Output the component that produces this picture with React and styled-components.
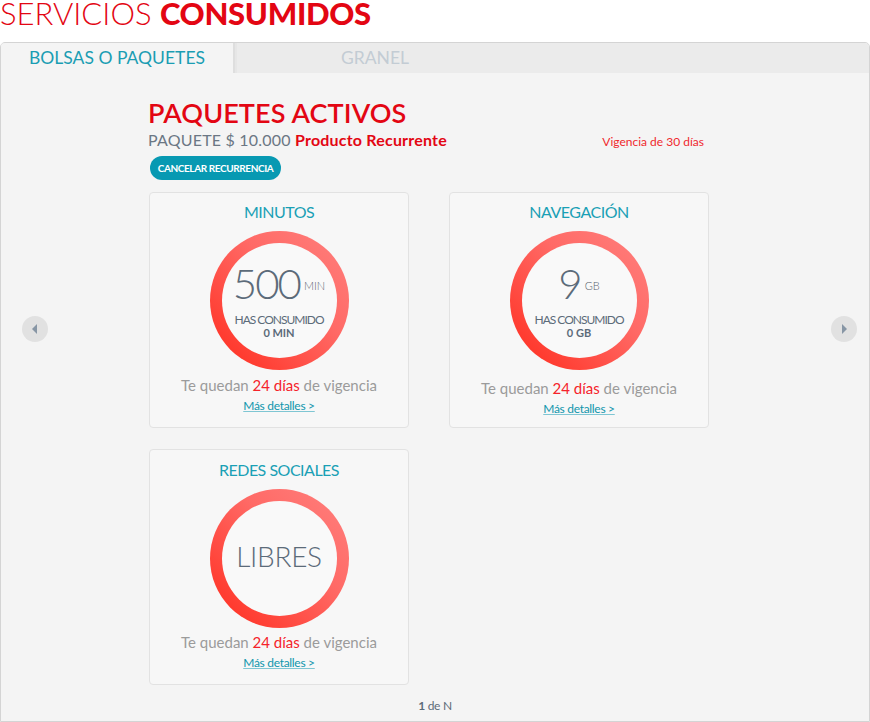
import React from "react";
import styled, { createGlobalStyle } from "styled-components";

const Global = createGlobalStyle`
  html, body { margin: 0; padding: 0; background: #fff; }
  body { font-family: Lato, "Open Sans", sans-serif; }
  * { box-sizing: border-box; }
`;

const Page = styled.div`
  width: 870px;
`;

const Heading = styled.h1`
  margin: 0 0 16px;
  height: 26px;
  font-size: 31px;
  line-height: 26px;
  color: #e30613;
  font-weight: 300;
  white-space: nowrap;
`;

const Strong = styled.span`
  font-weight: 900;
  letter-spacing: -0.3px;
`;

const Panel = styled.section`
  width: 870px;
  height: 680px;
  border: 1px solid #d4d4d4;
  border-radius: 5px 5px 0 0;
  background: #f4f4f4;
  overflow: hidden;
  display: flex;
  flex-direction: column;
`;

const TabBar = styled.div`
  display: flex;
  height: 30px;
  background: #ebebeb;
`;

const Tab = styled.div`
  width: ${(p) => p.$w}px;
  height: 30px;
  display: flex;
  align-items: center;
  justify-content: center;
  font-size: 17.5px;
  line-height: 30px;
  color: ${(p) => (p.$active ? "#1a9db3" : "#c3ccd4")};
  background: ${(p) => (p.$active ? "#f4f4f4" : "transparent")};
  box-shadow: ${(p) => (p.$active ? "2px 0 0 #dedede, 4px 0 0 #e6e6e6" : "none")};
  margin-right: ${(p) => (p.$active ? 4 : 0)}px;
`;

const Body = styled.div`
  display: grid;
  grid-template-columns: 147px 561px 1fr;
  grid-template-rows: auto auto;
`;

const ArrowButton = styled.div`
  width: 26px;
  height: 26px;
  border-radius: 50%;
  background: #e1e1e1;
  display: flex;
  align-items: center;
  justify-content: center;
  margin-top: 243px;
  justify-self: ${(p) => (p.$right ? "end" : "start")};
  margin-left: ${(p) => (p.$right ? 0 : 21)}px;
  margin-right: ${(p) => (p.$right ? 12 : 0)}px;
`;

const Main = styled.div`
  padding-top: 24px;
`;

const Title = styled.h2`
  margin: 0;
  font-size: 27px;
  line-height: 32px;
  font-weight: 600;
  color: #e30613;
  letter-spacing: 0.1px;
`;

const InfoRow = styled.div`
  margin-top: 1px;
  display: flex;
  justify-content: space-between;
  align-items: baseline;
  padding-right: 5px;
`;

const PackName = styled.div`
  font-size: 16px;
  line-height: 20px;
  color: #6b7784;
  font-weight: 400;
  letter-spacing: 0.2px;
`;

const Recurrent = styled.span`
  color: #e30613;
  font-weight: 700;
`;

const Validity = styled.div`
  font-size: 12px;
  color: #f0282d;
`;

const CancelButton = styled.button`
  margin: 6px 0 0 2px;
  width: 131px;
  height: 24px;
  border: none;
  border-radius: 12px;
  background: #0799b2;
  color: #fff;
  font-family: Lato, sans-serif;
  font-size: 10px;
  font-weight: 700;
  letter-spacing: -0.4px;
  padding: 0;
  display: block;
`;

const CardGrid = styled.div`
  margin-top: 12px;
  padding-left: 1px;
  display: grid;
  grid-template-columns: 260px 260px;
  column-gap: 40px;
  row-gap: 21px;
`;

const Card = styled.div`
  height: 236px;
  border: 1px solid #e2e2e2;
  border-radius: 4px;
  background: #f7f7f7;
  padding-top: ${(p) => p.$pt || 9}px;
  display: flex;
  flex-direction: column;
  align-items: center;
`;

const CardTitle = styled.div`
  font-size: 16px;
  line-height: 20px;
  color: #1aa0b5;
  letter-spacing: -0.5px;
`;

const Ring = styled.div`
  margin-top: 9px;
  width: 139px;
  height: 139px;
  border-radius: 50%;
  padding: 12px;
  background: linear-gradient(to top right, #ff3528 10%, #ff6a66 60%, #ff807e);
`;

const RingInner = styled.div`
  width: 100%;
  height: 100%;
  border-radius: 50%;
  background: #f9f9f9;
  display: flex;
  flex-direction: column;
  align-items: center;
  justify-content: center;
  color: #5c6b79;
`;

const BigValue = styled.div`
  font-size: 42px;
  line-height: 44px;
  font-weight: 300;
  letter-spacing: -2px;
  white-space: nowrap;
  margin-top: -1px;
`;

const Unit = styled.span`
  font-size: 11px;
  font-weight: 300;
  letter-spacing: 0;
  vertical-align: 9px;
  color: #56616d;
  margin-left: ${(p) => p.$ml}px;
`;

const Consumed = styled.div`
  margin-top: 5px;
  font-size: 12px;
  line-height: 13px;
  letter-spacing: -1px;
  font-weight: 400;
`;

const ConsumedValue = styled.div`
  font-size: 11px;
  line-height: 13px;
  font-weight: 700;
`;

const Free = styled.div`
  font-size: 28px;
  font-weight: 300;
  letter-spacing: -0.3px;
  margin-top: -6px;
`;

const Remaining = styled.div`
  margin-top: ${(p) => p.$mt}px;
  font-size: 15px;
  line-height: 20px;
  color: #9b9b9b;
  white-space: nowrap;
`;

const Days = styled.span`
  color: #f5232b;
`;

const Details = styled.a`
  margin-top: 3px;
  font-size: 12px;
  line-height: 16px;
  color: #1196ad;
  text-decoration: underline;
  text-decoration-color: #7fc6d3;
  letter-spacing: -0.3px;
  cursor: pointer;
`;

const Pager = styled.div`
  grid-column: 1 / -1;
  margin-top: 13px;
  text-align: center;
  font-size: 12px;
  line-height: 16px;
  color: #5c6b79;
  letter-spacing: -0.3px;
`;

const Triangle = ({ right }) => (
  <svg width="8" height="10" viewBox="0 0 8 10">
    {right ? (
      <path d="M2 0 L7 5 L2 10 Z" fill="#8796a5" />
    ) : (
      <path d="M6 0 L1 5 L6 10 Z" fill="#8796a5" />
    )}
  </svg>
);

const UsageCard = ({ title, value, unit, unitGap, consumed, mt }) => (
  <Card>
    <CardTitle>{title}</CardTitle>
    <Ring>
      <RingInner>
        <BigValue>
          {value}
          <Unit $ml={unitGap}>{unit}</Unit>
        </BigValue>
        <Consumed>HAS CONSUMIDO</Consumed>
        <ConsumedValue>{consumed}</ConsumedValue>
      </RingInner>
    </Ring>
    <Remaining $mt={mt}>
      Te quedan <Days>24 días</Days> de vigencia
    </Remaining>
    <Details>Más detalles &gt;</Details>
  </Card>
);

export default function App() {
  return (
    <Page>
      <Global />
      <Heading>
        SERVICIOS <Strong>CONSUMIDOS</Strong>
      </Heading>
      <Panel>
        <TabBar>
          <Tab $active $w={232}>BOLSAS O PAQUETES</Tab>
          <Tab $w={276}>GRANEL</Tab>
        </TabBar>
        <Body>
          <ArrowButton>
            <Triangle />
          </ArrowButton>
          <Main>
            <Title>PAQUETES ACTIVOS</Title>
            <InfoRow>
              <PackName>
                PAQUETE $ 10.000 <Recurrent>Producto Recurrente</Recurrent>
              </PackName>
              <Validity>Vigencia de 30 días</Validity>
            </InfoRow>
            <CancelButton>CANCELAR RECURRENCIA</CancelButton>
            <CardGrid>
              <UsageCard title="MINUTOS" value="500" unit="MIN" unitGap={4} consumed="0 MIN" mt={5} />
              <UsageCard title="NAVEGACIÓN" value="9" unit="GB" unitGap={4} consumed="0 GB" mt={8} />
              <Card $pt={10}>
                <CardTitle>REDES SOCIALES</CardTitle>
                <Ring>
                  <RingInner>
                    <Free>LIBRES</Free>
                  </RingInner>
                </Ring>
                <Remaining $mt={4}>
                  Te quedan <Days>24 días</Days> de vigencia
                </Remaining>
                <Details>Más detalles &gt;</Details>
              </Card>
            </CardGrid>
          </Main>
          <ArrowButton $right>
            <Triangle right />
          </ArrowButton>
          <Pager>
            <b>1</b> de N
          </Pager>
        </Body>
      </Panel>
    </Page>
  );
}
